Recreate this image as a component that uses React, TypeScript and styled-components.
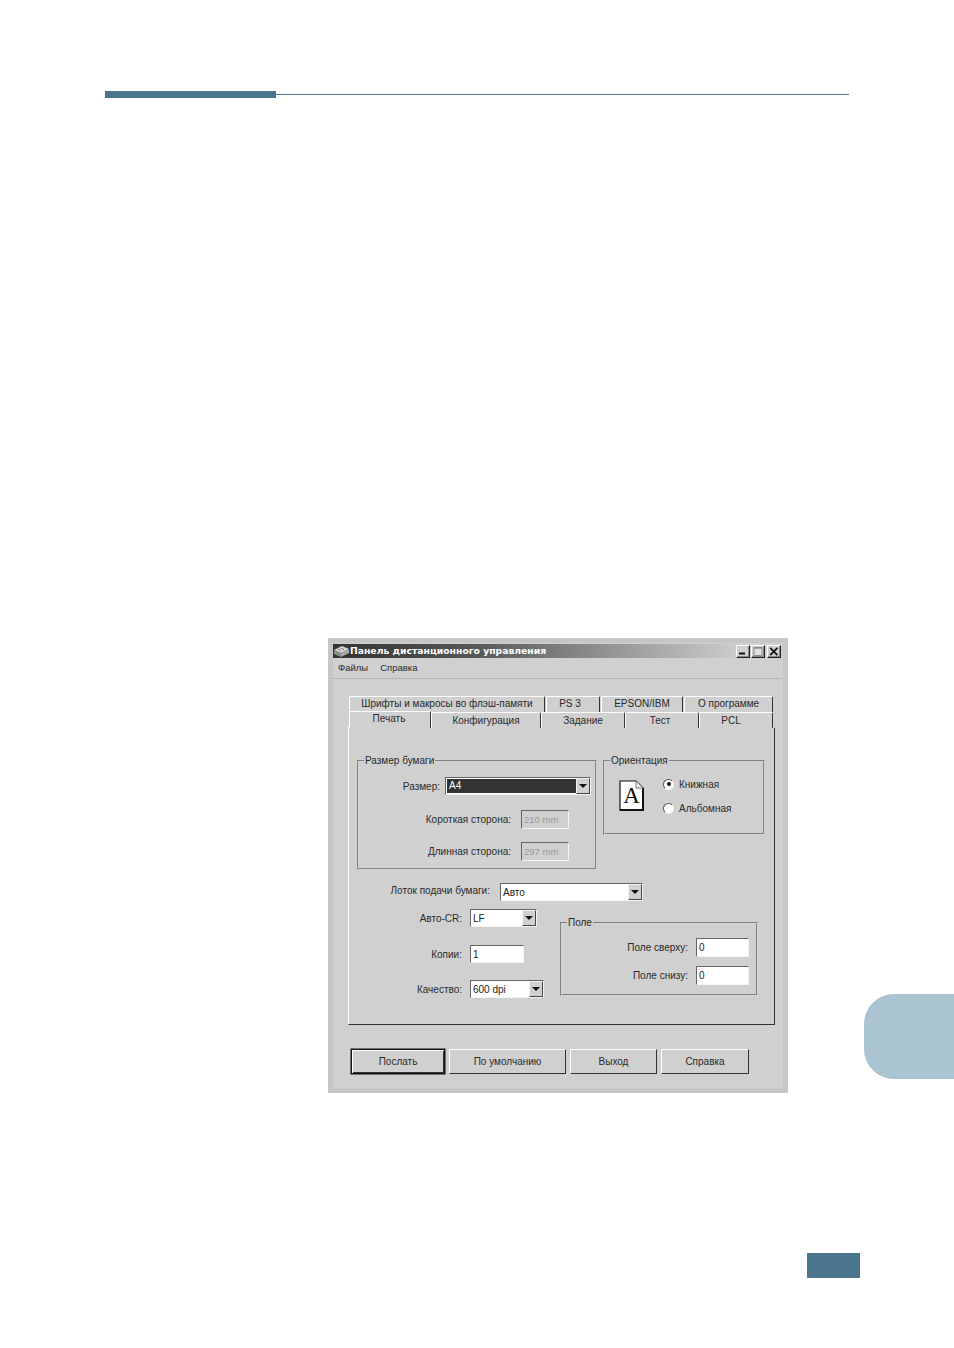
import React from "react";
import styled, { createGlobalStyle } from "styled-components";

const GlobalStyle = createGlobalStyle`
  html, body {
    margin: 0;
    padding: 0;
    background: #fff;
  }
  body {
    font-family: "Liberation Sans", Arial, sans-serif;
    font-size: 10px;
    color: #2a2a2a;
  }
  * {
    box-sizing: border-box;
  }
`;

/* ================== PAGE ================== */

const Page = styled.div`
  width: 954px;
  height: 1348px;
  padding-top: 91px;
  overflow: hidden;
`;

const Rule = styled.div`
  display: flex;
  align-items: center;
  width: 744px;
  margin-left: 105px;
`;

const RuleThick = styled.div`
  width: 171px;
  height: 7px;
  background: #4a758c;
`;

const RuleThin = styled.div`
  flex: 1;
  height: 1px;
  background: #4a758c;
`;

const MiddleRow = styled.div`
  display: flex;
  align-items: flex-start;
  margin-top: 540px;
`;

const SideTab = styled.div`
  width: 90px;
  height: 85px;
  margin: 356px 0 0 76px;
  background: #abc4d2;
  border-radius: 30px 0 0 30px;
`;

const PageNumber = styled.div`
  width: 53px;
  height: 25px;
  margin: 160px 0 0 807px;
  background: #4a758c;
`;

/* ================== WINDOW ================== */

const Window = styled.div`
  width: 460px;
  height: 455px;
  margin-left: 328px;
  padding: 6px 6px 6px 5px;
  background: #d0d0d0;
  box-shadow: inset 0 0 0 5px #c6c6c6;
  flex-shrink: 0;
`;

const TitleBar = styled.div`
  display: flex;
  align-items: center;
  height: 14px;
  padding-left: 1px;
  background: linear-gradient(to right, #333 0%, #555 30%, #d0d0d0 92%);
`;

const TitleText = styled.span`
  margin-left: 1px;
  color: #fff;
  font-family: "DejaVu Sans", sans-serif;
  font-weight: 700;
  font-size: 9.25px;
  line-height: 14px;
  white-space: nowrap;
`;

const WindowButtons = styled.div`
  display: flex;
  margin-left: auto;
  margin-right: 1px;
`;

const WindowButton = styled.div<{ $gap?: number }>`
  display: flex;
  align-items: center;
  justify-content: center;
  width: 14px;
  height: 13px;
  margin-left: ${({ $gap }) => $gap ?? 0}px;
  background: #d0d0d0;
  border: 1px solid;
  border-color: #fff #222 #222 #fff;
  box-shadow: inset -1px -1px 0 #8a8a8a;
`;

const MenuBar = styled.div`
  display: flex;
  gap: 12px;
  height: 21px;
  padding: 4px 0 0 5px;
  line-height: 12px;
  border-bottom: 1px solid #b4b4b4;
  font-size: 9.5px;
`;

const TabStrip = styled.div`
  margin: 17px 0 0 16px;
  width: 424px;
`;

const TabRow = styled.div`
  display: flex;
  height: 15.5px;
`;

const Tab = styled.div<{ $w: number; $selected?: boolean; $back?: boolean; $gap?: number; $inset?: number }>`
  width: ${({ $w }) => $w}px;
  margin-right: ${({ $gap }) => $gap ?? 0}px;
  padding-right: ${({ $inset }) => $inset ?? 0}px;
  text-align: center;
  white-space: nowrap;
  line-height: ${({ $selected, $back }) => ($selected ? 14 : $back ? 13 : 15)}px;
  position: relative;
  z-index: ${({ $selected }) => ($selected ? 2 : 1)};
  background: #d0d0d0;
  border-top: 1px solid #fff;
  border-left: 1px solid #fff;
  border-right: 1px solid #333;
  border-radius: 2px 2px 0 0;
  height: ${({ $selected }) => ($selected ? 17 : 16)}px;
  ${({ $selected }) => ($selected ? "margin-top: -1px;" : "")}
`;

const Panel = styled.div`
  width: 427px;
  height: 298px;
  margin: 0 0 0 15px;
  padding: 27px 0 0 8px;
  border: 1px solid;
  border-color: #fff #333 #333 #fff;
`;

const TopGroups = styled.div`
  display: flex;
  align-items: flex-start;
  gap: 6px;
`;

const Group = styled.fieldset<{ $w: number; $h: number }>`
  width: ${({ $w }) => $w}px;
  height: ${({ $h }) => $h}px;
  margin: 0;
  padding: 0;
  border: 2px groove #d4d4d4;
  min-width: 0;
  flex-shrink: 0;
`;

const GroupLegend = styled.legend`
  margin-left: 5px;
  padding: 0 1px;
  line-height: 12px;
`;

const GroupBody = styled.div<{ $gap: number; $top: number }>`
  display: flex;
  flex-direction: column;
  gap: ${({ $gap }) => $gap}px;
  padding-top: ${({ $top }) => $top}px;
`;

const FieldRow = styled.div<{ $label: number; $gap?: number }>`
  display: grid;
  grid-template-columns: ${({ $label }) => $label}px auto;
  justify-content: start;
  align-items: center;
  column-gap: ${({ $gap }) => $gap ?? 8}px;
`;

const SizeRow = styled(FieldRow)`
  margin-bottom: 2px;
`;

const CopiesRow = styled(FieldRow)`
  margin-top: 1px;
`;

const FieldLabel = styled.span`
  text-align: right;
  white-space: nowrap;
`;

const TrayLabel = styled(FieldLabel)`
  margin-bottom: 3px;
`;

const Sunken = styled.div<{ $w: number; $h?: number; $disabled?: boolean }>`
  display: flex;
  align-items: center;
  justify-content: space-between;
  width: ${({ $w }) => $w}px;
  height: ${({ $h }) => $h ?? 18}px;
  padding-left: 2px;
  border: 1.5px solid;
  border-color: #666 #f4f4f4 #f4f4f4 #666;
  background: ${({ $disabled }) => ($disabled ? "#d0d0d0" : "#fff")};
  color: ${({ $disabled }) => ($disabled ? "#9a9a9a" : "#222")};
  font-size: ${({ $disabled }) => ($disabled ? 9.5 : 10)}px;
  white-space: nowrap;
`;

const Selection = styled.span`
  flex: 1;
  align-self: stretch;
  margin: 1px 0 1px -1px;
  padding-left: 2px;
  background: #333;
  color: #fff;
  line-height: 14px;
`;

const DropButton = styled.span`
  display: flex;
  align-items: center;
  justify-content: center;
  flex: none;
  width: 14px;
  height: 100%;
  background: #d0d0d0;
  border: 1px solid;
  border-color: #f4f4f4 #444 #444 #f4f4f4;

  &::after {
    content: "";
    border-style: solid;
    border-width: 4px 4px 0;
    border-color: #111 transparent transparent;
  }
`;

const OrientationBody = styled.div`
  display: flex;
  align-items: flex-start;
  padding: 13px 0 0 14px;
`;

const RadioList = styled.div`
  display: flex;
  flex-direction: column;
  gap: 12px;
  margin: -2px 0 0 19px;
`;

const RadioRow = styled.div`
  display: flex;
  align-items: center;
  gap: 5px;
  height: 12px;
`;

const Radio = styled.span<{ $checked?: boolean }>`
  display: flex;
  align-items: center;
  justify-content: center;
  width: 11px;
  height: 11px;
  border-radius: 50%;
  background: #fff;
  border: 1px solid;
  border-color: #555 #eee #eee #555;

  &::after {
    content: "";
    display: ${({ $checked }) => ($checked ? "block" : "none")};
    width: 4px;
    height: 4px;
    border-radius: 50%;
    background: #111;
  }
`;

const TrayRow = styled(FieldRow)`
  margin-top: 13px;
`;

const LowerArea = styled.div`
  display: flex;
  align-items: flex-start;
  margin-top: 8px;
`;

const LeftFields = styled.div`
  display: flex;
  flex-direction: column;
  gap: 17px;
  width: 203px;
`;

const MarginGroup = styled(Group)`
  margin-top: 8px;
`;

const ButtonRow = styled.div`
  display: flex;
  gap: 4px;
  margin: 24px 0 0 18px;
`;

const DialogButton = styled.div<{ $w: number; $default?: boolean }>`
  display: flex;
  align-items: center;
  justify-content: center;
  width: ${({ $w }) => $w}px;
  height: 25px;
  padding-bottom: 1px;
  border: 1px solid;
  border-color: ${({ $default }) => ($default ? "#111" : "#fff #333 #333 #fff")};
  box-shadow: ${({ $default }) => ($default ? "inset 1px 1px 0 #fff, inset -1px -1px 0 #333, 0 0 0 0.5px #111" : "none")};
`;

/* ================== ICONS ================== */

const AppIcon = () => (
  <svg width="15" height="13" viewBox="0 0 15 13">
    <path d="M0 5 8 1l7 3-8 4z" fill="#d8d8d8" />
    <path d="M0 5l7 3v4L0 9z" fill="#8c8c8c" />
    <path d="M7 8l8-4v4l-8 4z" fill="#a8a8a8" />
    <path d="M4 4l3 1.6M7 3l3 1.6" stroke="#777" strokeWidth="1" fill="none" />
  </svg>
);

const MinGlyph = () => (
  <svg width="10" height="8" viewBox="0 0 10 8">
    <path d="M1 6.5h6" stroke="#111" strokeWidth="2" />
  </svg>
);

const MaxGlyph = () => (
  <svg width="10" height="9" viewBox="0 0 10 9">
    <rect x="1" y="0.5" width="8" height="8" fill="#e2e2e2" stroke="#8a8a8a" />
    <path d="M1 1.2h8" stroke="#8a8a8a" />
  </svg>
);

const CloseGlyph = () => (
  <svg width="10" height="9" viewBox="0 0 10 9">
    <path d="M1.2 0.8l7.2 7.4M8.4 0.8l-7.2 7.4" stroke="#111" strokeWidth="1.7" />
  </svg>
);

const PortraitIcon = () => (
  <svg width="25" height="31" viewBox="0 0 25 31">
    <path d="M1 1h16l7 7v22H1z" fill="#fff" stroke="#111" strokeWidth="1.2" />
    <path d="M1 30h23V8" fill="none" stroke="#111" strokeWidth="2" />
    <path d="M17 1v7h7z" fill="#eee" stroke="#777" strokeWidth="1" />
    <text x="12.5" y="23" textAnchor="middle" fontFamily="Liberation Serif, serif" fontSize="23" fill="#111">
      A
    </text>
  </svg>
);

/* ================== COMPONENT ================== */

const backTabs = [
  { label: "Шрифты и макросы во флэш-памяти", w: 196, gap: 1, inset: 0 },
  { label: "PS 3", w: 54, gap: 1, inset: 6 },
  { label: "EPSON/IBM", w: 82, gap: 1, inset: 0 },
  { label: "О программе", w: 89, gap: 0, inset: 0 },
];

const frontTabs = [
  { label: "Печать", w: 82, selected: true, inset: 2 },
  { label: "Конфигурация", w: 110, inset: 0 },
  { label: "Задание", w: 84, inset: 0 },
  { label: "Тест", w: 74, inset: 4 },
  { label: "PCL", w: 74, inset: 10 },
];

const buttons = [
  { label: "Послать", w: 94, isDefault: true },
  { label: "По умолчанию", w: 117 },
  { label: "Выход", w: 87 },
  { label: "Справка", w: 88 },
];

export default function App() {
  return (
    <Page>
      <GlobalStyle />
      <Rule>
        <RuleThick />
        <RuleThin />
      </Rule>

      <MiddleRow>
        <Window>
          <TitleBar>
            <AppIcon />
            <TitleText>Панель дистанционного управления</TitleText>
            <WindowButtons>
              <WindowButton><MinGlyph /></WindowButton>
              <WindowButton $gap={1}><MaxGlyph /></WindowButton>
              <WindowButton $gap={2}><CloseGlyph /></WindowButton>
            </WindowButtons>
          </TitleBar>

          <MenuBar>
            <span>Файлы</span>
            <span>Справка</span>
          </MenuBar>

          <TabStrip>
            <TabRow>
              {backTabs.map((t) => (
                <Tab key={t.label} $back $w={t.w} $gap={t.gap} $inset={t.inset}>{t.label}</Tab>
              ))}
            </TabRow>
            <TabRow>
              {frontTabs.map((t) => (
                <Tab key={t.label} $w={t.w} $selected={t.selected} $inset={t.inset}>{t.label}</Tab>
              ))}
            </TabRow>
          </TabStrip>

          <Panel>
            <TopGroups>
              <Group $w={240} $h={115}>
                <GroupLegend>Размер бумаги</GroupLegend>
                <GroupBody $gap={13} $top={10}>
                  <SizeRow $label={81} $gap={5}>
                    <FieldLabel>Размер:</FieldLabel>
                    <Sunken $w={146}>
                      <Selection>A4</Selection>
                      <DropButton />
                    </Sunken>
                  </SizeRow>
                  <FieldRow $label={152} $gap={10}>
                    <FieldLabel>Короткая сторона:</FieldLabel>
                    <Sunken $w={48} $h={19} $disabled>210 mm</Sunken>
                  </FieldRow>
                  <FieldRow $label={152} $gap={10}>
                    <FieldLabel>Длинная сторона:</FieldLabel>
                    <Sunken $w={48} $h={19} $disabled>297 mm</Sunken>
                  </FieldRow>
                </GroupBody>
              </Group>

              <Group $w={162} $h={80}>
                <GroupLegend>Ориентация</GroupLegend>
                <OrientationBody>
                  <PortraitIcon />
                  <RadioList>
                    <RadioRow>
                      <Radio $checked />
                      Книжная
                    </RadioRow>
                    <RadioRow>
                      <Radio />
                      Альбомная
                    </RadioRow>
                  </RadioList>
                </OrientationBody>
              </Group>
            </TopGroups>

            <TrayRow $label={133} $gap={10}>
              <TrayLabel>Лоток подачи бумаги:</TrayLabel>
              <Sunken $w={143}>
                Авто
                <DropButton />
              </Sunken>
            </TrayRow>

            <LowerArea>
              <LeftFields>
                <FieldRow $label={105}>
                  <FieldLabel>Авто-CR:</FieldLabel>
                  <Sunken $w={67}>
                    LF
                    <DropButton />
                  </Sunken>
                </FieldRow>
                <CopiesRow $label={105}>
                  <FieldLabel>Копии:</FieldLabel>
                  <Sunken $w={54}>1</Sunken>
                </CopiesRow>
                <FieldRow $label={105}>
                  <FieldLabel>Качество:</FieldLabel>
                  <Sunken $w={74}>
                    600 dpi
                    <DropButton />
                  </Sunken>
                </FieldRow>
              </LeftFields>

              <MarginGroup $w={198} $h={79}>
                <GroupLegend>Поле</GroupLegend>
                <GroupBody $gap={9} $top={9}>
                  <FieldRow $label={126}>
                    <FieldLabel>Поле сверху:</FieldLabel>
                    <Sunken $w={53} $h={19}>0</Sunken>
                  </FieldRow>
                  <FieldRow $label={126}>
                    <FieldLabel>Поле снизу:</FieldLabel>
                    <Sunken $w={53} $h={19}>0</Sunken>
                  </FieldRow>
                </GroupBody>
              </MarginGroup>
            </LowerArea>
          </Panel>

          <ButtonRow>
            {buttons.map((b) => (
              <DialogButton key={b.label} $w={b.w} $default={b.isDefault}>{b.label}</DialogButton>
            ))}
          </ButtonRow>
        </Window>
        <SideTab />
      </MiddleRow>

      <PageNumber />
    </Page>
  );
}
